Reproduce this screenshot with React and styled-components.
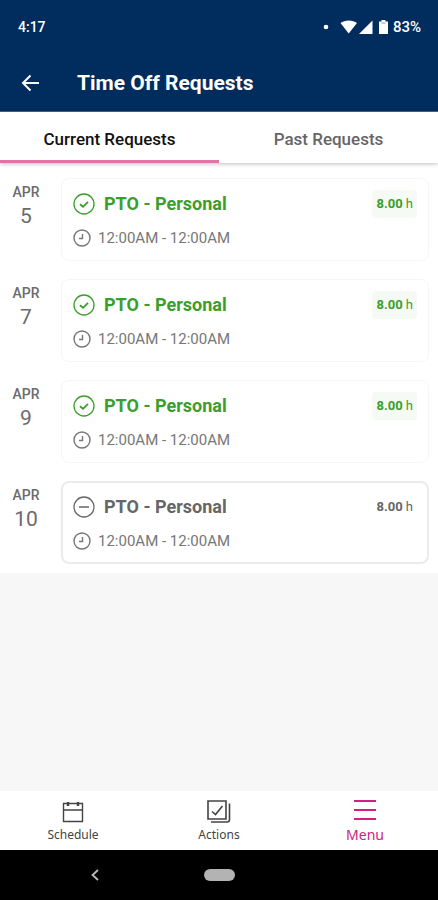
import { useState } from 'react'
import styled, { createGlobalStyle } from 'styled-components'

const GlobalStyle = createGlobalStyle`
  * {
    box-sizing: border-box;
  }

  body {
    background: #F7F7F7;
    font-family: Roboto, 'Liberation Sans', sans-serif;
    margin: 0;
  }
`

const Screen = styled.div`
  display: flex;
  flex-direction: column;
  min-height: 100vh;
`

const Header = styled.header`
  background: #002D5E;
  border-bottom: 1px solid #4A6488;
  color: #FFFFFF;
`

const StatusBar = styled.div`
  align-items: center;
  display: flex;
  font-size: 14px;
  font-weight: 500;
  height: 54px;
  justify-content: space-between;
  padding: 0 17px 0 18px;
`

const StatusIcons = styled.div`
  align-items: center;
  display: flex;
  font-size: 15px;

  svg {
    display: block;
  }
`

const AppBar = styled.div`
  align-items: center;
  display: flex;
  gap: 33px;
  height: 57px;
  padding: 0 15px;
`

const BackButton = styled.button`
  background: none;
  border: 0;
  color: inherit;
  cursor: pointer;
  height: 29px;
  padding: 0;
  width: 29px;

  svg {
    display: block;
    margin: auto;
  }
`

const PageTitle = styled.h1`
  font-size: 21px;
  font-weight: 700;
  line-height: 28px;
  margin: 0;
  padding-top: 1px;
`

const Tabs = styled.div`
  background: #FFFFFF;
  box-shadow: 0 1px 4px rgba(0, 0, 0, 0.25);
  display: flex;
  position: relative;
`

const Tab = styled.button`
  background: none;
  border: 0;
  border-bottom: 3px solid ${props => props.$active ? '#DB76A5' : 'transparent'};
  color: ${props => props.$active ? '#111111' : '#666666'};
  cursor: pointer;
  flex: 1;
  font-family: inherit;
  font-size: 17px;
  font-weight: 500;
  height: 51px;
  padding: 5px 0 0;
`

const RequestList = styled.ul`
  background: #FFFFFF;
  display: flex;
  flex-direction: column;
  gap: 18px;
  list-style: none;
  margin: 0;
  padding: 15px 9px 9px 0;
`

const RequestRow = styled.li`
  display: flex;
`

const DateColumn = styled.div`
  color: #6B6B6B;
  flex: none;
  padding: 4px 9px 0 0;
  text-align: center;
  width: 61px;
`

const Month = styled.div`
  font-size: 14px;
  font-weight: 500;
  line-height: 20px;
`

const Day = styled.div`
  font-size: 21px;
  line-height: 28px;
`

const Card = styled.article`
  border: ${props => props.$approved ? '1px solid #F6F6F6' : '2px solid #EBEBEB'};
  border-radius: 8px;
  display: flex;
  flex: 1;
  flex-direction: column;
  gap: 10px;
  height: 83px;
  padding: ${props => props.$approved ? '11px' : '10px'};
`

const CardTop = styled.div`
  align-items: center;
  color: ${props => props.$approved ? '#3B9E2C' : '#666666'};
  display: flex;
  gap: 9px;
  height: 28px;

  svg {
    flex: none;
  }
`

const CardTitle = styled.h2`
  flex: 1;
  font-size: 18px;
  font-weight: 700;
  line-height: 24px;
  margin: 0;
`

const Hours = styled.span`
  background: ${props => props.$approved ? '#F5FAF5' : 'transparent'};
  border-radius: 4px;
  font-size: 13px;
  line-height: 28px;
  padding: 0 4px;

  b {
    font-weight: 700;
  }
`

const TimeRange = styled.div`
  align-items: center;
  color: #777777;
  display: flex;
  font-size: 15px;
  gap: 7px;
  height: 20px;
`

const BottomNav = styled.nav`
  background: #FFFFFF;
  display: flex;
  height: 59px;
  margin-top: auto;
`

const NavLink = styled.a`
  align-items: center;
  color: ${props => props.$active ? '#CF2183' : '#444444'};
  display: flex;
  flex: 1;
  flex-direction: column;
  font-family: 'Noto Sans', sans-serif;
  font-size: ${props => props.$active ? '14px' : '12px'};
  gap: 2px;
  line-height: 20px;
  padding-top: 8px;
  text-decoration: none;
`

const SystemBar = styled.div`
  align-items: center;
  background: #000000;
  display: grid;
  grid-template-columns: 1fr auto 1fr;
  height: 50px;
`

const SystemBack = styled.button`
  background: none;
  border: 0;
  color: #BDBDBD;
  height: 24px;
  justify-self: center;
  margin-right: 13px;
  padding: 0;
  width: 24px;

  svg {
    display: block;
    margin: auto;
  }
`

const HomeButton = styled.button`
  background: #B3B3B3;
  border: 0;
  border-radius: 6px;
  height: 12px;
  padding: 0;
  width: 31px;
`

const requests = [
  { month: 'APR', day: 5, approved: true },
  { month: 'APR', day: 7, approved: true },
  { month: 'APR', day: 9, approved: true },
  { month: 'APR', day: 10, approved: false },
]

const SignalIcons = () => (
  <svg width="70" height="18" viewBox="0 0 70 18" fill="currentColor" aria-hidden="true">
    <circle cx="3" cy="9" r="2.3" />
    <path d="M17.5 5C21.5 1.500 30 1.500 34 5L25.700 15.500Z" />
    <path d="M49.500 2.500V16H36Z" />
    <path d="M58.500 2h4v1.500h2.500V16h-9V3.500h2.500Z" />
    <path d="M58.500 5h4" stroke="#8A9BB5" />
  </svg>
)

const StatusIcon = ({ approved }) => (
  <svg width="22" height="22" viewBox="0 0 22 22" fill="none" stroke="currentColor" strokeWidth="1.300" aria-hidden="true">
    <circle cx="11" cy="11" r="10" />
    {approved
      ? <path d="M7 11.200l3 2.600 5-5" strokeWidth="1.800" />
      : <path d="M6 11h10" strokeWidth="1.500" />}
  </svg>
)

const ClockIcon = () => (
  <svg width="18" height="18" viewBox="0 0 18 18" fill="none" stroke="currentColor" strokeWidth="1.400" aria-hidden="true">
    <circle cx="9" cy="9" r="8" />
    <path d="M9.500 5v4.500H6" />
  </svg>
)

const CalendarIcon = () => (
  <svg width="22" height="24" viewBox="0 0 22 24" fill="none" stroke="currentColor" strokeWidth="1.400" aria-hidden="true">
    <path d="M1.500 4.500h19v18h-19zM1.500 11h19" />
    <path d="M6 3v4M16 3v4" strokeWidth="2.400" />
  </svg>
)

const ActionsIcon = () => (
  <svg width="24" height="24" viewBox="0 0 24 24" fill="none" stroke="currentColor" strokeWidth="1.600" aria-hidden="true">
    <path d="M1 2h18v18H1z" />
    <path d="M22.500 4.500v16q0 2.500-2.500 2.500H4" />
    <path d="M5 12.500l3.500 3L15.500 7" />
  </svg>
)

const MenuIcon = () => (
  <svg width="22" height="24" viewBox="0 0 22 24" stroke="currentColor" strokeWidth="1.800" aria-hidden="true">
    <path d="M0 2h22M0 11h22M0 20h22" />
  </svg>
)

const Request = ({ month, day, approved }) => (
  <RequestRow>
    <DateColumn>
      <Month>{month}</Month>
      <Day>{day}</Day>
    </DateColumn>
    <Card $approved={approved}>
      <CardTop $approved={approved}>
        <StatusIcon approved={approved} />
        <CardTitle>PTO - Personal</CardTitle>
        <Hours $approved={approved}><b>8.00</b> h</Hours>
      </CardTop>
      <TimeRange>
        <ClockIcon />
        12:00AM - 12:00AM
      </TimeRange>
    </Card>
  </RequestRow>
)

export default function App() {
  const [tab, setTab] = useState('current')

  return (
    <Screen>
      <GlobalStyle />
      <Header>
        <StatusBar>
          <span>4:17</span>
          <StatusIcons>
            <SignalIcons />
            <span>83%</span>
          </StatusIcons>
        </StatusBar>
        <AppBar>
          <BackButton aria-label="Back">
            <svg width="18" height="18" viewBox="0 0 18 18" fill="none" stroke="currentColor" strokeWidth="2">
              <path d="M18 9H2M9.500 1.500L2 9l7.500 7.500" />
            </svg>
          </BackButton>
          <PageTitle>Time Off Requests</PageTitle>
        </AppBar>
      </Header>
      <Tabs role="tablist">
        <Tab role="tab" aria-selected={tab === 'current'} $active={tab === 'current'} onClick={() => setTab('current')}>
          Current Requests
        </Tab>
        <Tab role="tab" aria-selected={tab === 'past'} $active={tab === 'past'} onClick={() => setTab('past')}>
          Past Requests
        </Tab>
      </Tabs>
      <RequestList>
        {
          requests.map((request) => (
            <Request key={request.day} {...request} />
          ))
        }
      </RequestList>
      <BottomNav>
        <NavLink href="#schedule"><CalendarIcon />Schedule</NavLink>
        <NavLink href="#actions"><ActionsIcon />Actions</NavLink>
        <NavLink href="#menu" $active><MenuIcon />Menu</NavLink>
      </BottomNav>
      <SystemBar>
        <SystemBack aria-label="System back">
          <svg width="8" height="12" viewBox="0 0 8 12" fill="none" stroke="currentColor" strokeWidth="1.800">
            <path d="M7 1L1.500 6 7 11" />
          </svg>
        </SystemBack>
        <HomeButton aria-label="Home" />
      </SystemBar>
    </Screen>
  )
}
